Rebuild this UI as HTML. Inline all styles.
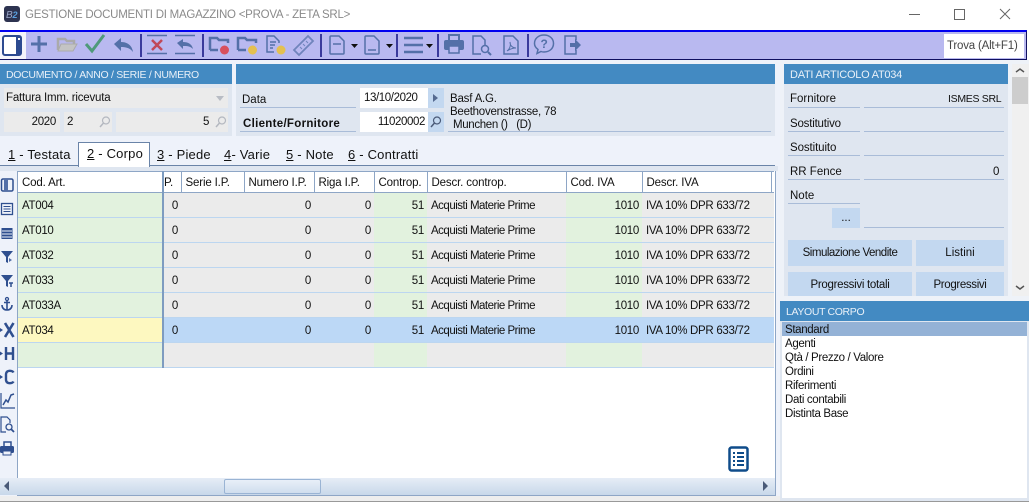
<!DOCTYPE html>
<html><head><meta charset="utf-8">
<style>
*{box-sizing:border-box}
html,body{margin:0;padding:0;background:#fff}
body{width:1029px;height:502px;overflow:hidden;position:relative;font-family:"Liberation Sans",sans-serif;font-size:11.5px;color:#111}
.a{position:absolute;white-space:nowrap}
.hd{position:absolute;background:#438ac2;color:#e8f0f8;height:20px;line-height:22px;font-size:11px}
.ln{position:absolute;height:1px;background:#a9bcd8}
.lb{position:absolute;white-space:nowrap;line-height:16px}
.tab{position:absolute;top:147px;font-size:13px;line-height:16px;white-space:nowrap;letter-spacing:.2px}
.tab u{text-underline-offset:1px}
svg{position:absolute;overflow:visible}
table{position:absolute;left:18px;top:171px;border-collapse:collapse;table-layout:fixed;width:756px}
td,th{padding:0;font-weight:normal;overflow:hidden;white-space:nowrap;font-size:11.5px}
th{height:21px;background:#fff;border-right:1px solid #8ea6c6;border-top:1px solid #8ea6c6;border-bottom:1px solid #8ea6c6;text-align:left;padding-left:4px;padding-top:1px;letter-spacing:-.15px}
td{height:25px;border-bottom:1px solid #bcd6f0;background:#ebebeb;padding-top:1px;letter-spacing:-.3px}
td.g{background:#e2f2de}
td.r{text-align:right;padding-right:3px}
td.l{padding-left:4px}
td.q{padding-left:4px;letter-spacing:-.5px}
td.s,th.s{border-left:2px solid #7e9cc0;border-right:0}
tr.sel td{background:#bcd8f6}
tr.sel td.y{background:#fdf8c0}
.btn{position:absolute;background:#c3d8f0;text-align:center;white-space:nowrap}
</style></head><body>

<!-- title bar -->
<svg style="left:4px;top:6px" width="16" height="16"><rect width="16" height="16" rx="3" fill="#2d3350"/><text x="2" y="12" font-size="10" font-style="italic" fill="#9aa6c8" font-family="Liberation Sans">B</text><text x="8.5" y="12" font-size="9" font-weight="bold" font-style="italic" fill="#5aa0e0" font-family="Liberation Sans">2</text></svg>
<div class="a" style="left:25px;top:7px;font-size:11.5px;line-height:16px;color:#8a8a8a;letter-spacing:-.25px">GESTIONE DOCUMENTI DI MAGAZZINO &lt;PROVA - ZETA SRL&gt;</div>
<svg style="left:909px;top:9px" width="110" height="12"><path d="M0 5.500H11" stroke="#666" fill="none"/><rect x="45.500" y=".5" width="10" height="10" stroke="#666" fill="none"/><path d="M91 0L101 10M101 0L91 10" stroke="#666" fill="none"/></svg>

<!-- toolbar -->
<div class="a" style="left:0;top:30px;width:1027px;height:30px;background:#b9b9f0;border-top:2px solid #0000f0;border-bottom:1px solid #101060;border-right:1px solid #101060"></div>
<div class="a" style="left:0;top:32px;width:26px;height:27px;background:#f4f4fa"></div>
<div class="a" style="left:944px;top:34px;width:80px;height:24px;background:#fff;color:#444;line-height:25px;padding-left:3px;font-size:11.5px;letter-spacing:-.2px">Trova (Alt+F1)</div>
<svg style="left:0;top:32px" width="600" height="27" fill="none">
 <rect x="3" y="4" width="18" height="19" rx="2" fill="#fff" stroke="#2c4a90" stroke-width="2"/><rect x="16" y="4" width="5" height="19" fill="#2c4a90"/><rect x="18" y="6" width="2" height="2" fill="#fff"/>
 <path d="M39 4V20M31 12H47" stroke="#5470a8" stroke-width="3"/>
 <path d="M58 18V7h7l2 2h7v4" stroke="#aaa" stroke-width="2.500"/><path d="M58 19l3-7h16l-4 7z" fill="#c4c4c4" stroke="#aaa"/>
 <path d="M86 12l6 7L104 3" stroke="#4f9a7a" stroke-width="3"/>
 <path d="M114 12l7-6v4c6 0 11 3 12 10-3-4-7-5-12-5v4z" fill="#5470a8"/>
 <path d="M141 2V25" stroke="#101080" stroke-width="1.500"/>
 <path d="M147 3.500H167M147 21.500H167" stroke="#5470a8" stroke-width="1.500"/><path d="M152 8l10 10M162 8l-10 10" stroke="#c04858" stroke-width="2.500"/>
 <path d="M175 3.500H195M175 21.500H195" stroke="#5470a8" stroke-width="1.500"/><path d="M177 11l6-4v3c5 0 9 2 10 7-3-3-6-3-10-3v3z" fill="#5470a8"/>
 <path d="M203 2V25" stroke="#101080" stroke-width="1.500"/>
 <path d="M210 18V6h7l2 2h9v3M210 18h8" stroke="#5470a8" stroke-width="2.500"/><circle cx="224.500" cy="18" r="4.500" fill="#d8505c"/>
 <path d="M238 18V6h7l2 2h9v3M238 18h8" stroke="#5470a8" stroke-width="2.500"/><circle cx="252.500" cy="18" r="4.500" fill="#e4c050"/>
 <path d="M274 20h-7V4h7l5 5v2M270 10h6M270 13h5M270 16h3" stroke="#5470a8" stroke-width="1.500"/><circle cx="281" cy="18" r="4.500" fill="#e4c050"/>
 <path d="M294 18L308 4l5 5-14 14z" stroke="#7084bc" stroke-width="1.800"/><path d="M300 15l2 2M303 12l2 2M306 9l2 2" stroke="#7084bc"/>
 <path d="M321 2V25" stroke="#101080" stroke-width="1.500"/>
 <path d="M330 5a1 1 0 0 1 1-1h8l5 5v12a1 1 0 0 1-1 1h-12a1 1 0 0 1-1-1z" stroke="#5470a8" stroke-width="1.500"/><path d="M333 12h8" stroke="#5470a8" stroke-width="1.500"/>
 <path d="M351 12h7l-3.500 4z" fill="#111"/>
 <path d="M365 5a1 1 0 0 1 1-1h8l5 5v12a1 1 0 0 1-1 1h-12a1 1 0 0 1-1-1z" stroke="#5470a8" stroke-width="1.500"/><path d="M368 18h8" stroke="#5470a8" stroke-width="1.500"/>
 <path d="M386 12h7l-3.500 4z" fill="#111"/>
 <path d="M397 2V25" stroke="#101080" stroke-width="1.500"/>
 <path d="M404 6h19M404 13h19M404 20h19" stroke="#5470a8" stroke-width="2.500"/>
 <path d="M426 12h7l-3.500 4z" fill="#111"/>
 <path d="M438 2V25" stroke="#101080" stroke-width="1.500"/>
 <path d="M449 9V3h10v6" stroke="#5470a8" stroke-width="2"/><rect x="444" y="8" width="20" height="10" rx="2" fill="#5470a8"/><rect x="449" y="14" width="10" height="7" fill="#b9b9f0" stroke="#5470a8" stroke-width="1.500"/>
 <path d="M485 14V8l-4-4h-8v18h8" stroke="#5470a8" stroke-width="1.500"/><circle cx="485" cy="17" r="3.500" stroke="#5470a8" stroke-width="1.500"/><path d="M488 20l3 3" stroke="#5470a8" stroke-width="2"/>
 <path d="M504 4h9l5 5v13h-14z" stroke="#5470a8" stroke-width="1.500"/><path d="M507 19c3-2 4-6 3-9 0 4 3 6 6 6-3 0-6 1-9 3z" stroke="#5470a8"/>
 <path d="M528 2V25" stroke="#101080" stroke-width="1.500"/>
 <path d="M544 3c5.500 0 9.500 3.500 9.500 8.500s-4 8.500-9.500 8.500c-1 0-2 0-3-.500l-4 2 1-4c-2-1.500-3.500-4-3.500-6 0-5 4-8.500 9.500-8.500z" stroke="#5470a8" stroke-width="1.500"/><text x="540.500" y="16" font-size="12" font-weight="bold" fill="#5470a8" font-family="Liberation Sans">?</text>
 <path d="M576 8V4h-11v18h11v-4" stroke="#5470a8" stroke-width="1.500"/><path d="M570 11h5V7l6 6-6 6v-4h-5z" fill="#5470a8"/>
</svg>

<!-- page bg -->
<div class="a" style="left:0;top:60px;width:1029px;height:442px;background:#eef2fa"></div>

<!-- doc panel -->
<div class="hd" style="left:0;top:64px;width:232px;padding-left:6px;font-size:10.5px;letter-spacing:-.3px">DOCUMENTO / ANNO / SERIE / NUMERO</div>
<div class="a" style="left:0;top:84px;width:232px;height:52px;background:#dfe6f0"></div>
<div class="a" style="left:4px;top:88px;width:224px;height:20px;background:#ebebeb;line-height:21px;padding-left:2px;letter-spacing:-.2px">Fattura Imm. ricevuta</div>
<svg style="left:216px;top:96px" width="10" height="6"><path d="M0 0h8L4 5z" fill="#b8bcc4"/></svg>
<div class="a" style="left:4px;top:112px;width:56px;height:20px;background:#ebebeb;line-height:21px;text-align:right;padding-right:4px;letter-spacing:-.3px">2020</div>
<div class="a" style="left:64px;top:112px;width:48px;height:20px;background:#ebebeb;line-height:21px;padding-left:3px">2</div>
<div class="a" style="left:116px;top:112px;width:112px;height:20px;background:#ebebeb;line-height:21px;padding-left:87px">5</div>
<svg style="left:99px;top:116px" width="12" height="12" fill="none"><circle cx="7" cy="4.500" r="3.500" stroke="#b4b8c0" stroke-width="1.200"/><path d="M4.500 7L1 11" stroke="#b4b8c0" stroke-width="1.500"/></svg>
<svg style="left:215px;top:116px" width="12" height="12" fill="none"><circle cx="7" cy="4.500" r="3.500" stroke="#b4b8c0" stroke-width="1.200"/><path d="M4.500 7L1 11" stroke="#b4b8c0" stroke-width="1.500"/></svg>

<!-- middle panel -->
<div class="hd" style="left:236px;top:64px;width:539px"></div>
<div class="a" style="left:236px;top:84px;width:539px;height:52px;background:#dfe6f0"></div>
<div class="lb" style="left:242px;top:92px">Data</div><div class="ln" style="left:240px;top:107px;width:116px"></div>
<div class="lb" style="left:243px;top:116px;font-weight:bold;letter-spacing:.3px">Cliente/Fornitore</div><div class="ln" style="left:240px;top:131px;width:116px"></div>
<div class="a" style="left:360px;top:88px;width:68px;height:20px;background:#fff;line-height:21px;padding-left:4px;letter-spacing:-.4px">13/10/2020</div>
<div class="a" style="left:428px;top:88px;width:16px;height:20px;background:#c3d8f0"></div>
<svg style="left:433px;top:94px" width="6" height="8"><path d="M0 0l5 4-5 4z" fill="#556a90"/></svg>
<div class="a" style="left:360px;top:112px;width:68px;height:20px;background:#fff;line-height:21px;text-align:right;padding-right:3px;letter-spacing:-.4px">11020002</div>
<div class="a" style="left:428px;top:112px;width:16px;height:20px;background:#c3d8f0"></div>
<svg style="left:430px;top:116px" width="12" height="12" fill="none"><circle cx="7" cy="4.500" r="3.500" stroke="#4a5a78" stroke-width="1.200"/><path d="M4.500 7L1 11" stroke="#4a5a78" stroke-width="1.500"/></svg>
<div class="lb" style="left:450px;top:91px;letter-spacing:-.2px">Basf A.G.</div>
<div class="lb" style="left:450px;top:104px;letter-spacing:-.25px">Beethovenstrasse, 78</div>
<div class="lb" style="left:453px;top:117px;white-space:pre;letter-spacing:-.35px">Munchen ()   (D)</div>
<div class="ln" style="left:448px;top:131px;width:323px"></div>

<!-- tabs -->
<div class="a" style="left:0;top:165px;width:775px;height:1px;background:#6a84a8"></div>
<div class="a" style="left:0;top:166px;width:778px;height:5px;background:#dfe6f0"></div>
<div class="a" style="left:78px;top:142px;width:72px;height:25px;background:#fff;border:1px solid #6a84a8;border-bottom:0"></div>
<div class="tab" style="left:8px"><u>1</u> - Testata</div>
<div class="tab" style="left:87px;top:146px"><u>2</u> - Corpo</div>
<div class="tab" style="left:157px"><u>3</u> - Piede</div>
<div class="tab" style="left:224px"><u>4</u>- Varie</div>
<div class="tab" style="left:286px"><u>5</u> - Note</div>
<div class="tab" style="left:348px"><u>6</u> - Contratti</div>

<!-- grid -->
<div class="a" style="left:17px;top:171px;width:759px;height:325px;background:#fff;border:1px solid #8ea6c6;border-top:0"></div>
<table>
<colgroup><col style="width:145px"><col style="width:18px"><col style="width:63px"><col style="width:70px"><col style="width:60px"><col style="width:53px"><col style="width:139px"><col style="width:76px"><col style="width:129px"><col style="width:3px"></colgroup>
<tr><th>Cod. Art.</th><th class="s" style="padding-left:0;border-right:1px solid #8ea6c6;border-left:2px solid #7e9cc0">P.</th><th>Serie I.P.</th><th>Numero I.P.</th><th>Riga I.P.</th><th>Controp.</th><th>Descr. controp.</th><th>Cod. IVA</th><th>Descr. IVA</th><th style="border-right:0;padding:0"></th></tr>
<tr><td class="g l">AT004</td><td class="s r">0</td><td></td><td class="r">0</td><td class="r">0</td><td class="g r">51</td><td class="q">Acquisti Materie Prime</td><td class="g r">1010</td><td class="l">IVA 10% DPR 633/72</td><td></td></tr>
<tr><td class="g l">AT010</td><td class="s r">0</td><td></td><td class="r">0</td><td class="r">0</td><td class="g r">51</td><td class="q">Acquisti Materie Prime</td><td class="g r">1010</td><td class="l">IVA 10% DPR 633/72</td><td></td></tr>
<tr><td class="g l">AT032</td><td class="s r">0</td><td></td><td class="r">0</td><td class="r">0</td><td class="g r">51</td><td class="q">Acquisti Materie Prime</td><td class="g r">1010</td><td class="l">IVA 10% DPR 633/72</td><td></td></tr>
<tr><td class="g l">AT033</td><td class="s r">0</td><td></td><td class="r">0</td><td class="r">0</td><td class="g r">51</td><td class="q">Acquisti Materie Prime</td><td class="g r">1010</td><td class="l">IVA 10% DPR 633/72</td><td></td></tr>
<tr><td class="g l">AT033A</td><td class="s r">0</td><td></td><td class="r">0</td><td class="r">0</td><td class="g r">51</td><td class="q">Acquisti Materie Prime</td><td class="g r">1010</td><td class="l">IVA 10% DPR 633/72</td><td></td></tr>
<tr class="sel"><td class="y l">AT034</td><td class="s r">0</td><td></td><td class="r">0</td><td class="r">0</td><td class="r">51</td><td class="q">Acquisti Materie Prime</td><td class="r">1010</td><td class="l">IVA 10% DPR 633/72</td><td></td></tr>
<tr><td class="g"></td><td class="s"></td><td></td><td></td><td></td><td class="g"></td><td></td><td class="g"></td><td></td><td></td></tr>
</table>
<svg style="left:728px;top:446px" width="22" height="27" fill="none"><rect x="1.500" y="1.500" width="18" height="23" rx="2" stroke="#0f4c8a" stroke-width="2.500"/><path d="M5 7h2M9 7h7M5 11h2M9 11h7M5 15h2M9 15h7M5 19h2M9 19h7" stroke="#0f4c8a" stroke-width="2"/></svg>

<!-- horizontal scrollbar -->
<div class="a" style="left:0;top:478px;width:775px;height:17px;background:linear-gradient(#e6edf6,#c8d8ea)"></div>
<div class="a" style="left:224px;top:479px;width:97px;height:15px;background:linear-gradient(#e8eff8,#d0deee);border:1px solid #9ab4d4;border-radius:2px"></div>
<svg style="left:4px;top:481px" width="6" height="10"><path d="M5 0v10L0 5z" fill="#4a5a78"/></svg>
<svg style="left:763px;top:481px" width="6" height="10"><path d="M0 0v10l5-5z" fill="#4a5a78"/></svg>
<div class="a" style="left:0;top:496px;width:780px;height:5px;background:#eeeeee"></div>
<div class="a" style="left:0;top:501px;width:1029px;height:1px;background:#999"></div>

<!-- left icons -->
<svg style="left:0;top:176px" width="17" height="285" fill="none">
 <rect x="1.500" y="3" width="11.500" height="12" rx="1.500" stroke="#2f4f8f" stroke-width="1.500"/><rect x="4" y="3" width="4" height="12" fill="#5470a8"/>
 <rect x="1.500" y="27.500" width="11" height="11" stroke="#2f4f8f" stroke-width="1.300"/><path d="M3.500 30.500h7M3.500 33h7M3.500 35.500h7" stroke="#2f4f8f"/>
 <rect x="1.500" y="52" width="11" height="11" fill="#2f4f8f"/><path d="M2 55h10M2 58h10M2 61h10" stroke="#eef2fa"/>
 <path d="M1 75h12l-5 6v6l-2-1v-5z" fill="#2f4f8f"/><path d="M9 82l3 2-3 2z" fill="#5470a8"/>
 <path d="M1 99h12l-5 6v6l-2-1v-5z" fill="#2f4f8f"/><path d="M9 107h4M11 107v4" stroke="#2f4f8f" stroke-width="1.500"/>
 <circle cx="7" cy="123" r="1.500" stroke="#2f4f8f" stroke-width="1.300"/><path d="M7 125v9M4 126.500h6M2 129c0 3 2 5 5 5s5-2 5-5" stroke="#2f4f8f" stroke-width="1.600"/>
 <path d="M0 152l3 2-3 2z" fill="#2f4f8f"/><path d="M5 147l8.500 14M13.500 147l-8.500 14" stroke="#2f4f8f" stroke-width="2.600"/>
 <path d="M0 175.500l3 2-3 2z" fill="#2f4f8f"/><path d="M6 171v13M13 171v13M6 177.500h7" stroke="#2f4f8f" stroke-width="2.400"/>
 <path d="M0 199l3 2-3 2z" fill="#2f4f8f"/><path d="M13.500 196.500c-1-2-7-3-7.500 1.500v6c.5 4.500 6.500 3.500 7.500 1.500" stroke="#2f4f8f" stroke-width="2.400"/>
 <path d="M1 217v15h14" stroke="#2f4f8f" stroke-width="1.200"/><path d="M3 229l3-5 2 2 3-7 3-1" stroke="#2f4f8f" stroke-width="1.500"/>
 <path d="M6 256H1V241h6l3 3v3" stroke="#2f4f8f" stroke-width="1.200"/><circle cx="9" cy="251" r="3" stroke="#2f4f8f" stroke-width="1.300"/><path d="M11 253l3 3" stroke="#2f4f8f" stroke-width="1.800"/>
 <path d="M4 271v-5h7v5" stroke="#2f4f8f" stroke-width="1.500"/><rect x="0" y="270" width="14" height="7" rx="1.500" fill="#2f4f8f"/><rect x="3" y="275" width="8" height="4" fill="#eef2fa" stroke="#2f4f8f"/>
</svg>

<!-- right panel -->
<div class="a" style="left:780px;top:60px;width:249px;height:241px;background:#eef2f8"></div>
<div class="hd" style="left:784px;top:64px;width:224px;padding-left:6px;letter-spacing:-.25px">DATI ARTICOLO AT034</div>
<div class="a" style="left:784px;top:84px;width:224px;height:212px;background:#dfe6f0"></div>
<div class="a" style="left:1012px;top:64px;width:17px;height:232px;background:#f0f0f0"></div>
<div class="a" style="left:1012px;top:77px;width:16px;height:27px;background:#cdcdcd"></div>
<svg style="left:1015px;top:67px" width="10" height="7" fill="none"><path d="M1 5l4-3 4 3" stroke="#555" stroke-width="1.500"/></svg>
<svg style="left:1015px;top:285px" width="10" height="7" fill="none"><path d="M1 1l4 3 4-3" stroke="#555" stroke-width="1.500"/></svg>
<div class="lb" style="left:790px;top:91px">Fornitore</div>
<div class="lb" style="left:948px;top:91px;font-size:10.5px;letter-spacing:-.3px">ISMES SRL</div>
<div class="lb" style="left:790px;top:116px;letter-spacing:-.2px">Sostitutivo</div>
<div class="lb" style="left:790px;top:140px;letter-spacing:-.1px">Sostituito</div>
<div class="lb" style="left:790px;top:164px">RR Fence</div>
<div class="lb" style="left:993px;top:164px">0</div>
<div class="lb" style="left:790px;top:188px">Note</div>
<div class="ln" style="left:788px;top:107px;width:72px"></div><div class="ln" style="left:864px;top:107px;width:140px"></div>
<div class="ln" style="left:788px;top:131px;width:72px"></div><div class="ln" style="left:864px;top:131px;width:140px"></div>
<div class="ln" style="left:788px;top:155px;width:72px"></div><div class="ln" style="left:864px;top:155px;width:140px"></div>
<div class="ln" style="left:788px;top:179px;width:72px"></div><div class="ln" style="left:864px;top:179px;width:140px"></div>
<div class="ln" style="left:788px;top:203px;width:72px"></div><div class="ln" style="left:864px;top:227px;width:140px"></div>
<div class="btn" style="left:832px;top:208px;width:28px;height:20px;line-height:20px">...</div>
<div class="btn" style="left:788px;top:240px;width:124px;height:26px;line-height:26px;letter-spacing:-.5px">Simulazione Vendite</div>
<div class="btn" style="left:916px;top:240px;width:88px;height:26px;line-height:26px">Listini</div>
<div class="btn" style="left:788px;top:272px;width:124px;height:24px;line-height:26px;letter-spacing:-.3px">Progressivi totali</div>
<div class="btn" style="left:916px;top:272px;width:88px;height:24px;line-height:26px;letter-spacing:-.35px">Progressivi</div>

<!-- layout list -->
<div class="hd" style="left:780px;top:301px;width:249px;padding-left:6px;font-size:10.5px;letter-spacing:-.35px">LAYOUT CORPO</div>
<div class="a" style="left:780px;top:321px;width:249px;height:180px;background:#dfe6f0"></div>
<div class="a" style="left:782px;top:322px;width:245px;height:176px;background:#fff"></div>
<div class="a" style="left:782px;top:322px;width:245px;height:14px;background:#94b2d6"></div>
<div class="a" style="left:785px;top:323px;line-height:14px;letter-spacing:-.35px">Standard<br>Agenti<br>Qtà / Prezzo / Valore<br>Ordini<br>Riferimenti<br>Dati contabili<br>Distinta Base</div>

</body></html>
